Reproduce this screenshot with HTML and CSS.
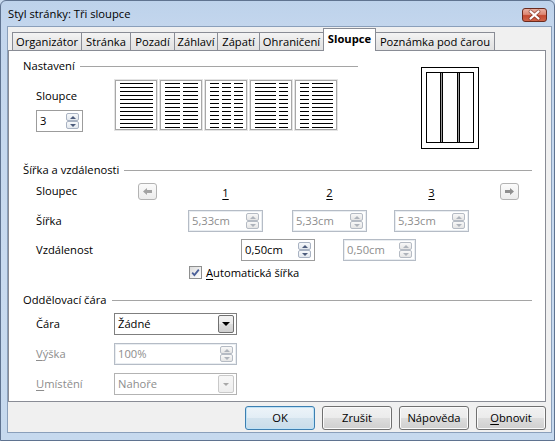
FILE: index.html
```html
<!DOCTYPE html>
<html lang="cs">
<head>
<meta charset="utf-8">
<title>Styl stránky: Tři sloupce</title>
<link rel="stylesheet" href="styles.css">
</head>
<body>
<div class="window">
  <div class="titlebar">
    <span class="title">Styl stránky: Tři sloupce</span>
    <div class="close">
      <svg width="23" height="12" viewBox="0 0 23 12">
        <path d="M7.5 2.5 L15.5 9.5 M15.5 2.5 L7.5 9.5" stroke="#6b2a1f" stroke-width="3.8" stroke-linecap="round" opacity=".55" fill="none"/>
        <path d="M7.5 2.5 L15.5 9.5 M15.5 2.5 L7.5 9.5" stroke="#ffffff" stroke-width="2.2" stroke-linecap="round" fill="none"/>
      </svg>
    </div>
  </div>
  <div class="client">
    <div class="tabs">
      <div class="tab t-org">Organizátor</div>
      <div class="tab t-str">Stránka</div>
      <div class="tab t-poz">Pozadí</div>
      <div class="tab t-zah">Záhlaví</div>
      <div class="tab t-zap">Zápatí</div>
      <div class="tab t-ohr">Ohraničení</div>
      <div class="tab t-slo sel">Sloupce</div>
      <div class="tab t-pozn">Poznámka pod čarou</div>
    </div>
    <div class="panel">
      <div class="sec1">
        <div class="sec1-left">
          <div class="heading">Nastavení</div>
          <div class="sec1-body">
            <div class="count">
              <div class="lbl">Sloupce</div>
              <div class="field en count-field">
                <span class="v">3</span>
                <div class="spin"><div class="sb up"></div><div class="sb down"></div></div>
              </div>
            </div>
            <div class="presets">
              <div class="preset"><div class="c c-full"></div></div>
              <div class="preset"><div class="c c-half"></div><div class="c c-half"></div></div>
              <div class="preset"><div class="c c-third"></div><div class="c c-third"></div><div class="c c-third"></div></div>
              <div class="preset"><div class="c c-wide"></div><div class="c c-narrow"></div></div>
              <div class="preset"><div class="c c-narrow"></div><div class="c c-wide"></div></div>
            </div>
          </div>
        </div>
        <div class="preview">
          <svg width="58" height="82" viewBox="0 0 58 82" shape-rendering="crispEdges">
            <rect x="0.5" y="0.5" width="57" height="81" fill="#fff" stroke="#000"/>
            <rect x="5.5" y="5.5" width="47" height="70" fill="#fff" stroke="#000"/>
            <rect x="19.5" y="5.5" width="2" height="70" fill="#9a9a9a" stroke="#000"/>
            <rect x="36.5" y="5.5" width="2" height="70" fill="#9a9a9a" stroke="#000"/>
          </svg>
        </div>
      </div>

      <div class="heading wide sec2-head">Šířka a vzdálenosti</div>
      <div class="row r-sloupec">
        <span class="lbl l-sloupec">Sloupec</span>
        <div class="ab">
          <svg width="9" height="7" viewBox="0 0 9 7"><polygon points="0,3.5 4,0 4,2 9,2 9,5 4,5 4,7" fill="#a3a3a3"/></svg>
        </div>
        <span class="num num1"><u>1</u></span>
        <span class="num num2"><u>2</u></span>
        <span class="num num3"><u>3</u></span>
        <div class="ab ab-next">
          <svg width="9" height="7" viewBox="0 0 9 7"><polygon points="9,3.5 5,0 5,2 0,2 0,5 5,5 5,7" fill="#8f8f8f"/></svg>
        </div>
      </div>
      <div class="row r-sirka">
        <span class="lbl l-sirka">Šířka</span>
        <div class="field dis w-col">
          <span class="v">5,33cm</span>
          <div class="spin"><div class="sb up"></div><div class="sb down"></div></div>
        </div>
        <div class="field dis w-col gap-a">
          <span class="v">5,33cm</span>
          <div class="spin"><div class="sb up"></div><div class="sb down"></div></div>
        </div>
        <div class="field dis w-col gap-b">
          <span class="v">5,33cm</span>
          <div class="spin"><div class="sb up"></div><div class="sb down"></div></div>
        </div>
      </div>
      <div class="row r-vzd">
        <span class="lbl l-vzd">Vzdálenost</span>
        <div class="field en w-gap1">
          <span class="v">0,50cm</span>
          <div class="spin"><div class="sb up"></div><div class="sb down"></div></div>
        </div>
        <div class="field dis w-gap2">
          <span class="v">0,50cm</span>
          <div class="spin"><div class="sb up"></div><div class="sb down"></div></div>
        </div>
      </div>
      <div class="row r-auto">
        <div class="cb">
          <svg width="11" height="11" viewBox="0 0 11 11"><path d="M2.2 5.6 L4.4 8 L8.8 2.6" stroke="#4a5f98" stroke-width="1.8" fill="none"/></svg>
        </div>
        <span><u>A</u>utomatická šířka</span>
      </div>

      <div class="heading wide sec3-head">Oddělovací čára</div>
      <div class="row r-cara">
        <span class="lbl l-sep">Čára</span>
        <div class="dd en w-sep">
          <span class="v">Žádné</span>
          <div class="ddb"><span class="tri"></span></div>
        </div>
      </div>
      <div class="row r-vyska">
        <span class="lbl l-sep dim"><u>V</u>ýška</span>
        <div class="field dis w-sep">
          <span class="v">100%</span>
          <div class="spin"><div class="sb up"></div><div class="sb down"></div></div>
        </div>
      </div>
      <div class="row r-umist">
        <span class="lbl l-sep dim"><u>U</u>místění</span>
        <div class="dd dis w-sep">
          <span class="v">Nahoře</span>
          <div class="ddb"><span class="tri"></span></div>
        </div>
      </div>
    </div>
    <div class="buttons">
      <div class="btn def">OK</div>
      <div class="btn">Zrušit</div>
      <div class="btn">Nápověda</div>
      <div class="btn"><u>O</u>bnovit</div>
    </div>
  </div>
</div>
</body>
</html>
```
FILE: styles.css
```css
* { box-sizing: border-box; }
html, body { margin: 0; padding: 0; }
body {
  width: 555px;
  height: 441px;
  overflow: hidden;
  background: #c8daef;
  font-family: "Open Sans", "Noto Sans", "DejaVu Sans", sans-serif;
  font-size: 11.2px;
  color: #000;
}
u { text-decoration: underline; text-underline-offset: 2px; }

.window {
  width: 555px;
  height: 441px;
  border: 1px solid #5f7390;
  border-radius: 6px 6px 0 0;
  background: linear-gradient(to bottom, #bdd2eb 0, #c3d6ed 25px, #c8daef 60%, #c6d9ee 100%);
  display: flex;
  flex-direction: column;
}

/* title bar */
.titlebar {
  height: 25px;
  display: flex;
  align-items: center;
  padding-left: 7px;
}
.title { flex: 1; line-height: 16px; padding-top: 1px; }
.close {
  width: 25px;
  height: 14px;
  margin-right: 7px;
  margin-top: 2px;
  border: 1px solid #6a2a1e;
  border-radius: 3px;
  background: linear-gradient(to bottom, #eab0a2 0%, #dd8773 45%, #c54a31 55%, #d0654a 100%);
  display: flex;
  align-items: center;
  justify-content: center;
}

/* client area */
.client {
  margin: 0 2px 7px 6px;
  height: 407px;
  border: 1px solid #8a9fba;
  background: #f0f0f0;
  display: flex;
  flex-direction: column;
}

/* tabs */
.tabs {
  display: flex;
  align-items: flex-end;
  height: 22px;
  margin-top: 1px;
  padding-left: 4px;
  position: relative;
  z-index: 1;
}
.tab {
  height: 18px;
  margin-left: -1px;
  border: 1px solid #898c95;
  border-bottom: none;
  background: linear-gradient(to bottom, #f4f4f4, #e9e9e9 50%, #e1e1e1);
  display: flex;
  align-items: center;
  justify-content: center;
  line-height: 16px;
  white-space: nowrap;
}
.t-org { width: 70px; margin-left: 0; }
.t-str { width: 50px; }
.t-poz { width: 45px; }
.t-zah { width: 44px; }
.t-zap { width: 43px; }
.t-ohr { width: 65px; }
.t-slo { width: 53px; }
.t-pozn { width: 120px; }
.tab.sel {
  height: 23px;
  margin-bottom: -1px;
  background: #fff;
  font-weight: bold;
  padding-bottom: 2px;
  position: relative;
  z-index: 2;
}

/* panel */
.panel {
  width: 538px;
  height: 352px;
  border: 1px solid #898c95;
  background: #fff;
  padding: 7px 0 0 14px;
}

.heading {
  display: flex;
  align-items: center;
  height: 16px;
  line-height: 16px;
  white-space: nowrap;
}
.heading::after {
  content: "";
  flex: 1;
  height: 1px;
  background: #a5a5a5;
  margin-left: 5px;
}
.heading.wide { width: 509px; }
.sec2-head { margin-top: 13px; }
.sec3-head { margin-top: 12px; }

.sec1 { display: flex; }
.sec1-left { width: 335px; }
.sec1-body { display: flex; margin-top: 6px; }
.count { width: 92px; padding-left: 13px; padding-top: 8px; }
.lbl { line-height: 16px; white-space: nowrap; }
.count-field { width: 47px; margin-top: 6px; }

.presets { display: flex; gap: 3px; }
.preset {
  width: 42px;
  height: 50px;
  border: 1px solid #a7a7a7;
  box-shadow: 0 0 0 1px #e4e4e4;
  background: #fff;
  display: flex;
  gap: 3px;
  padding: 2px 3px 0 4px;
}
.c {
  height: 45px;
  background: repeating-linear-gradient(to bottom, #000 0, #000 1px, transparent 1px, transparent 4px);
}
.c-full { width: 33px; }
.c-half { width: 15px; }
.c-third { width: 9px; }
.c-wide { width: 21px; }
.c-narrow { width: 9px; }

.preview { margin-left: 63px; margin-top: 9px; height: 82px; }
.preview svg { display: block; }

/* rows */
.row { display: flex; align-items: center; padding-left: 13px; }
.r-sloupec { margin-top: 4px; height: 18px; }
.l-sloupec { width: 102px; }
.num { width: 75px; text-align: center; padding-top: 4px; line-height: 16px; }
.num1 { margin-left: 31px; }
.num2 { margin-left: 29px; }
.num3 { margin-left: 27px; }
.ab {
  width: 19px;
  height: 17px;
  border: 1px solid #b3b3b3;
  border-radius: 3px;
  background: linear-gradient(to bottom, #fbfbfb, #ececec);
  display: flex;
  align-items: center;
  justify-content: center;
}
.ab-next { margin-left: 31px; }

.r-sirka { margin-top: 10px; height: 22px; }
.l-sirka { width: 152px; }
.w-col { width: 75px; }
.gap-a { margin-left: 29px; }
.gap-b { margin-left: 27px; }

.r-vzd { margin-top: 7px; height: 22px; }
.l-vzd { width: 205px; }
.w-gap1 { width: 74px; }
.w-gap2 { width: 73px; margin-left: 28px; }

.r-auto { margin-top: 3px; height: 16px; padding-left: 166px; }
.cb {
  width: 13px;
  height: 13px;
  border: 1px solid #8e8f8f;
  background: linear-gradient(135deg, #dcdcdc, #ffffff);
  margin-right: 4px;
  display: flex;
  align-items: center;
  justify-content: center;
}
.cb svg { display: block; }

.r-cara { margin-top: 5px; height: 22px; }
.r-vyska { margin-top: 8px; height: 22px; }
.r-umist { margin-top: 8px; height: 22px; }
.l-sep { width: 78px; }
.w-sep { width: 123px; }
.dim { color: #8d8d8d; }

/* fields */
.field, .dd {
  display: flex;
  height: 22px;
  border: 1px solid #abadb3;
  background: #fff;
}
.field .v, .dd .v {
  flex: 1;
  padding-left: 3px;
  line-height: 20px;
  white-space: nowrap;
}
.field.en { border-color: #9c9c9c; }
.field.dis { border-color: #b5bcc6; box-shadow: inset 0 0 0 1px #e9edf1; }
.field.dis .v, .dd.dis .v { color: #8d8d8d; }

.spin {
  width: 16px;
  display: flex;
  flex-direction: column;
  padding: 2px 3px 2px 0;
}
.sb {
  flex: 1;
  border: 1px solid #b5bbc4;
  border-radius: 2px;
  background: linear-gradient(to bottom, #f8f8f8, #e5e5e5);
  display: flex;
  align-items: center;
  justify-content: center;
}
.sb::before {
  content: "";
  width: 0;
  height: 0;
  border-left: 3px solid transparent;
  border-right: 3px solid transparent;
}
.sb.up::before { border-bottom: 3px solid #aeb3bb; }
.sb.down::before { border-top: 3px solid #aeb3bb; }
.field.en .sb { border-color: #a9b3c3; background: linear-gradient(to bottom, #f7f9fb, #e3e8ee); }
.field.en .sb.up::before { border-bottom-color: #4d5c7c; }
.field.en .sb.down::before { border-top-color: #4d5c7c; }

.dd.en { border-color: #7f7f7f; }
.dd.dis { border-color: #b3b3b3; }
.ddb {
  width: 16px;
  margin: 1px 2px 1px 0;
  border: 1px solid #707070;
  border-radius: 2px;
  background: linear-gradient(to bottom, #f2f2f2, #ebebeb 50%, #dddddd 51%, #cfcfcf);
  display: flex;
  align-items: center;
  justify-content: center;
}
.tri {
  width: 0;
  height: 0;
  border-left: 4px solid transparent;
  border-right: 4px solid transparent;
  border-top: 4px solid #000;
}
.dd.dis .ddb { border-color: #c9c9c9; background: linear-gradient(to bottom, #f7f7f7, #eeeeee); }
.dd.dis .tri { border-left-width: 3px; border-right-width: 3px; border-top: 3px solid #a8a8a8; }

/* buttons */
.buttons {
  display: flex;
  justify-content: flex-end;
  gap: 7px;
  margin-top: 4px;
  padding-right: 5px;
}
.btn {
  width: 70px;
  height: 24px;
  border: 1px solid #707070;
  border-radius: 3px;
  background: linear-gradient(to bottom, #f2f2f2, #ebebeb 50%, #dddddd 51%, #cfcfcf);
  box-shadow: inset 0 0 0 1px #fbfbfb;
  display: flex;
  align-items: center;
  justify-content: center;
  line-height: 16px;
}
.btn.def {
  border-color: #3c7fb1;
  background: linear-gradient(to bottom, #edf4f9, #e2edf5 50%, #d3e3ee 51%, #c9dce9);
  box-shadow: inset 0 0 0 1px #bfe2f6;
}
```
